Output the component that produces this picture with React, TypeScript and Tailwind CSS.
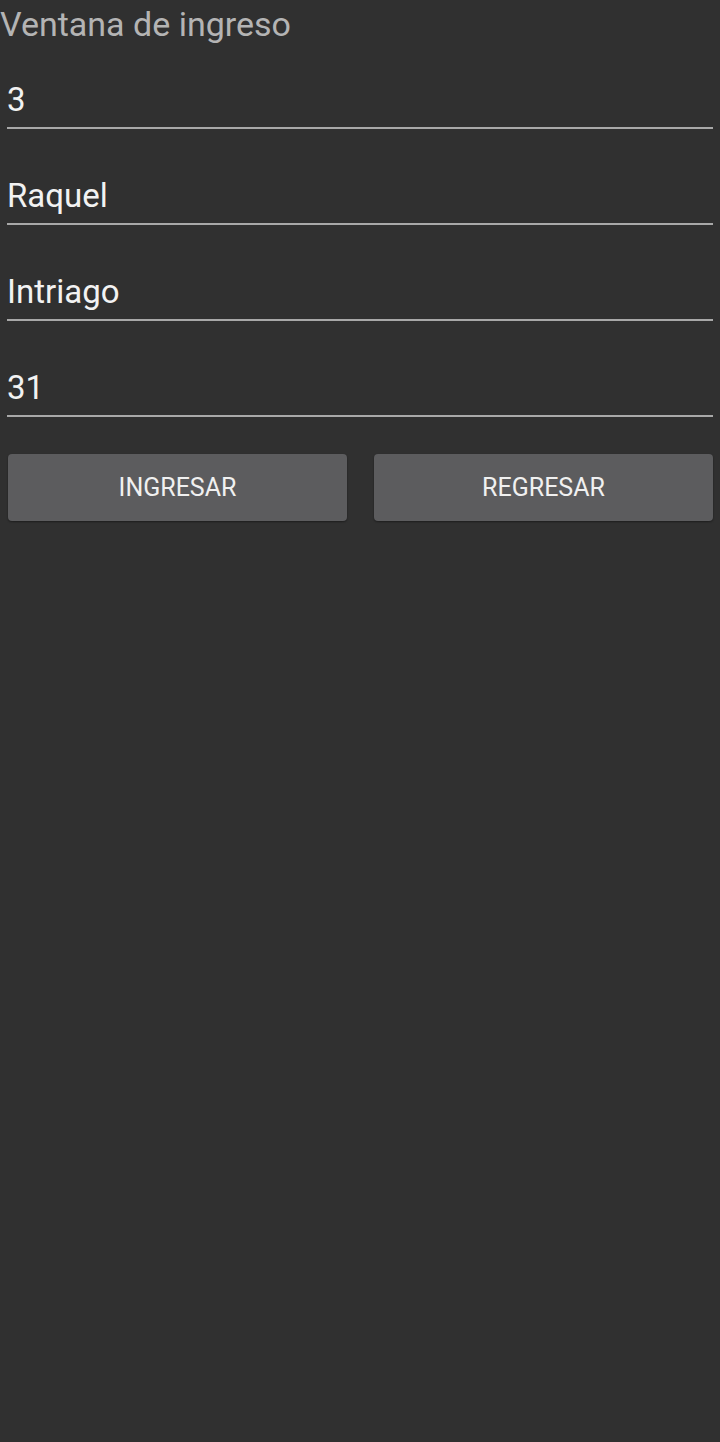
import React from 'react';

const fields = ['3', 'Raquel', 'Intriago', '31'];

export default function App() {
  return (
    <div
      className="min-h-[1442px] w-[720px] bg-[#303030]"
      style={{ fontFamily: 'Roboto, "Noto Sans", sans-serif' }}
    >
      <div className="pt-[4px] text-[34px] leading-[40px] text-[#b4b4b4]">Ventana de ingreso</div>

      <div className="flex flex-col gap-[47px] px-[7px] pt-[36px]">
        {fields.map((f) => (
          <div key={f} className="h-[49px] border-b-2 border-[#a8a8a8] text-[33px] leading-[40px] text-[#f2f2f2]">
            {f}
          </div>
        ))}
      </div>

      <div className="mt-[37px] grid grid-cols-2 gap-[27px] px-[8px] pr-[7px]">
        <button className="h-[67px] rounded-[4px] bg-[#5c5c5e] text-[25px] text-[#f0f0f0] shadow-[0_1px_2px_rgba(0,0,0,0.4)]">
          INGRESAR
        </button>
        <button className="h-[67px] rounded-[4px] bg-[#5c5c5e] text-[25px] text-[#f0f0f0] shadow-[0_1px_2px_rgba(0,0,0,0.4)]">
          REGRESAR
        </button>
      </div>
    </div>
  );
}
